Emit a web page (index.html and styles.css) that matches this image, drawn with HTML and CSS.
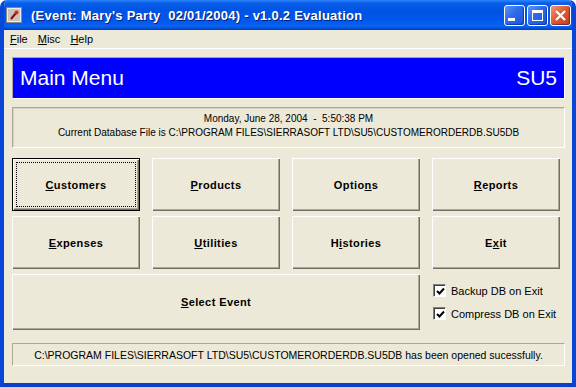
FILE: index.html
```html
<!DOCTYPE html>
<html lang="en">
<head>
    <meta charset="UTF-8">
    <title>(Event: Mary's Party 02/01/2004) - v1.0.2 Evaluation</title>
    <link rel="stylesheet" href="styles.css">
</head>
<body>
    <div class="window">
        <div class="titlebar">
            <svg class="app-icon" width="16" height="16" viewBox="0 0 16 16">
                <rect x="0.5" y="0.5" width="15" height="15" fill="#c8c4bc" stroke="#8a8780"/>
                <rect x="1.5" y="1.5" width="13" height="13" fill="none" stroke="#ffffff" stroke-opacity="0.7"/>
                <path d="M5 12 L10 6" stroke="#7a1010" stroke-width="2"/>
                <circle cx="10.5" cy="5.5" r="2" fill="#e02020"/>
            </svg>
            <span class="title-text">(Event: Mary's Party&nbsp; 02/01/2004) - v1.0.2 Evaluation</span>
            <div class="title-buttons">
                <span class="tb tb-min"><span class="glyph-min"></span></span>
                <span class="tb tb-max"><span class="glyph-max"></span></span>
                <span class="tb tb-close">
                    <svg width="13" height="13" viewBox="0 0 13 13">
                        <path d="M2 2 L11 11 M11 2 L2 11" stroke="#fff" stroke-width="2.2"/>
                    </svg>
                </span>
            </div>
        </div>

        <div class="menubar">
            <span class="menu-item"><u>F</u>ile</span>
            <span class="menu-item"><u>M</u>isc</span>
            <span class="menu-item"><u>H</u>elp</span>
        </div>

        <div class="client">
            <div class="banner">
                <span>Main Menu</span>
                <span>SU5</span>
            </div>

            <div class="info-box">
                <div>Monday, June 28, 2004&nbsp; -&nbsp; 5:50:38 PM</div>
                <div>Current Database File is C:\PROGRAM FILES\SIERRASOFT LTD\SU5\CUSTOMERORDERDB.SU5DB</div>
            </div>

            <div class="button-grid">
                <button class="btn btn-default"><span class="focus-ring"><u>C</u>ustomers</span></button>
                <button class="btn"><u>P</u>roducts</button>
                <button class="btn">Optio<u>n</u>s</button>
                <button class="btn"><u>R</u>eports</button>
                <button class="btn"><u>E</u>xpenses</button>
                <button class="btn"><u>U</u>tilities</button>
                <button class="btn">H<u>i</u>stories</button>
                <button class="btn">E<u>x</u>it</button>
                <button class="btn btn-wide"><u>S</u>elect Event</button>
                <div class="options">
                    <label class="check-row"><span class="check-box"><svg width="9" height="9" viewBox="0 0 9 9"><path d="M1 4 L3.5 6.5 L8 1.5" fill="none" stroke="#000" stroke-width="2"/></svg></span>Backup DB on Exit</label>
                    <label class="check-row"><span class="check-box"><svg width="9" height="9" viewBox="0 0 9 9"><path d="M1 4 L3.5 6.5 L8 1.5" fill="none" stroke="#000" stroke-width="2"/></svg></span>Compress DB on Exit</label>
                </div>
            </div>

            <div class="status-bar">C:\PROGRAM FILES\SIERRASOFT LTD\SU5\CUSTOMERORDERDB.SU5DB has been opened sucessfully.</div>
        </div>
    </div>
</body>
</html>
```

FILE: styles.css
```css
* {
    margin: 0;
    padding: 0;
    box-sizing: border-box;
}

body {
    background: #ffffff;
    font-family: 'Liberation Sans', Arial, sans-serif;
    font-size: 11px;
    color: #000;
}

.window {
    width: 576px;
    height: 387px;
    display: flex;
    flex-direction: column;
    background: #ece9d8;
    border-radius: 7px 7px 0 0;
    overflow: hidden;
    border-left: 4px solid #0846da;
    border-right: 4px solid #0846da;
    border-bottom: 4px solid #0841c8;
}

.titlebar {
    height: 30px;
    margin: 0 -4px;
    display: flex;
    align-items: center;
    padding: 0 5px 0 6px;
    background: linear-gradient(to bottom, #2f86ff 0%, #0a5fe8 10%, #0054e3 35%, #0058ee 70%, #0a62f0 88%, #0049d0 96%, #003cc0 100%);
}

.app-icon {
    flex: none;
}

.title-text {
    margin-left: 9px;
    color: #fff;
    font-weight: bold;
    font-size: 13px;
    letter-spacing: 0.25px;
    text-shadow: 1px 1px 0 #0a1e78;
    flex: 1;
    white-space: nowrap;
}

.title-buttons {
    display: flex;
    gap: 2px;
}

.tb {
    width: 21px;
    height: 21px;
    border: 1px solid #fff;
    border-radius: 3px;
    display: flex;
    align-items: center;
    justify-content: center;
    background: linear-gradient(135deg, #5c95f6 0%, #2d6ae8 45%, #1c55d8 100%);
    box-shadow: inset -1px -1px 1px rgba(0, 20, 120, 0.5);
}

.tb-close {
    background: linear-gradient(135deg, #f0967a 0%, #e15a32 45%, #c8401a 100%);
}

.glyph-min {
    width: 7px;
    height: 3px;
    background: #fff;
    margin: 9px 6px 0 0;
}

.glyph-max {
    width: 11px;
    height: 11px;
    border: 1px solid #fff;
    border-top-width: 3px;
}

.menubar {
    height: 19px;
    display: flex;
    align-items: center;
    padding-left: 6px;
    border-bottom: 1px solid #ffffff;
}

.menu-item {
    margin-right: 10px;
}

.client {
    flex: 1;
    padding: 8px 7px 0 8px;
    display: flex;
    flex-direction: column;
}

.banner {
    height: 42px;
    border: 1px solid;
    border-color: #aca899 #ffffff #ffffff #aca899;
    background: #0000ff;
    color: #fff;
    font-size: 21px;
    display: flex;
    justify-content: space-between;
    align-items: center;
    padding: 0 7px 0 7px;
}

.info-box {
    margin-top: 8px;
    height: 41px;
    border: 1px solid;
    border-color: #aca899 #ffffff #ffffff #aca899;
    box-shadow: inset 1px 1px 0 #d6d2c2;
    text-align: center;
    font-size: 10px;
    line-height: 14px;
    padding-top: 4px;
}

.button-grid {
    margin-top: 10px;
    display: grid;
    grid-template-columns: repeat(4, 128px);
    grid-template-rows: 53px 53px 56px;
    column-gap: 12px;
    row-gap: 5px;
}

.btn {
    font-family: 'Liberation Sans', Arial, sans-serif;
    font-size: 11px;
    font-weight: bold;
    letter-spacing: 0.4px;
    color: #000;
    background: #ece9d8;
    border: none;
    box-shadow: inset 1px 1px 0 #ffffff, inset -1px -1px 0 #716f64, inset -2px -2px 0 #aca899;
}

.btn-default {
    border: 1px solid #000;
    padding: 3px;
}

.focus-ring {
    display: flex;
    align-items: center;
    justify-content: center;
    height: 100%;
    border: 1px dotted #000;
}

.btn-wide {
    grid-column: 1 / 4;
}

.options {
    display: flex;
    flex-direction: column;
    justify-content: center;
    gap: 10px;
    padding-left: 1px;
}

.check-row {
    display: flex;
    align-items: center;
    gap: 5px;
    font-size: 11px;
}

.check-box {
    width: 13px;
    height: 13px;
    background: #fff;
    border: 1px solid;
    border-color: #808080 #ffffff #ffffff #808080;
    box-shadow: inset 1px 1px 0 #404040;
    display: flex;
    align-items: center;
    justify-content: center;
    padding: 1px 0 0 1px;
}

.status-bar {
    margin-top: 13px;
    height: 23px;
    border: 1px solid;
    border-color: #aca899 #ffffff #ffffff #aca899;
    display: flex;
    align-items: center;
    justify-content: center;
    font-size: 10.5px;
}
```
